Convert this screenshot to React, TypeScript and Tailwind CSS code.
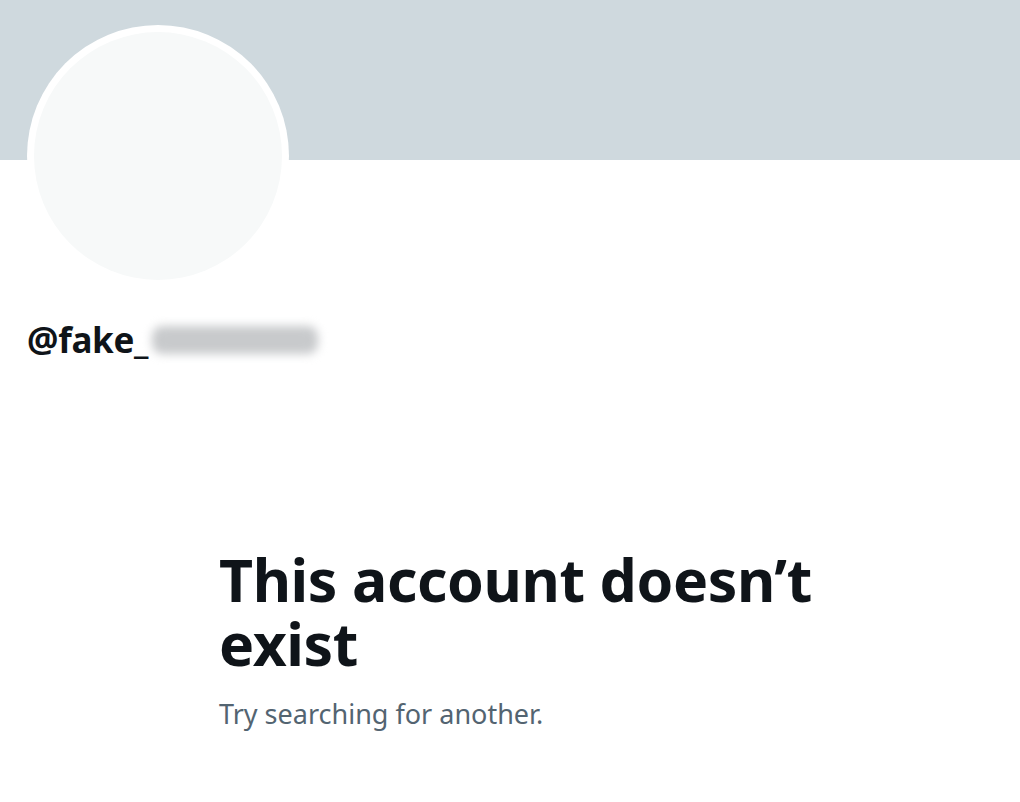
import React from "react";

export default function App() {
  return (
    <div className="w-[1020px] h-[802px] bg-white overflow-hidden" style={{ fontFamily: '"Noto Sans", "Open Sans", sans-serif' }}>
      <div className="h-[160px] bg-[#cfd9de]" />
      <div className="ml-[27px] -mt-[135px] w-[262px] h-[262px] rounded-full bg-white p-[7px]">
        <div className="w-full h-full rounded-full bg-[#f7f9f9]" />
      </div>
      <div className="ml-[27px] mt-[31px] flex items-center h-[44px]">
        <span className="text-[35px] font-bold text-[#0f1419] tracking-[-0.3px] leading-[44px]">@fake_</span>
        <span className="ml-[4px] w-[166px] h-[28px] rounded-[10px] bg-[#c8cacc] blur-[5px]" />
      </div>
      <div className="ml-[219px] mt-[185px] w-[640px]">
        <h1 className="text-[59px] font-bold leading-[64px] text-[#0f1419] tracking-[-0.4px]">
          This account doesn’t exist
        </h1>
        <p className="mt-[21px] text-[27px] leading-[36px] text-[#536471]">Try searching for another.</p>
      </div>
    </div>
  );
}
